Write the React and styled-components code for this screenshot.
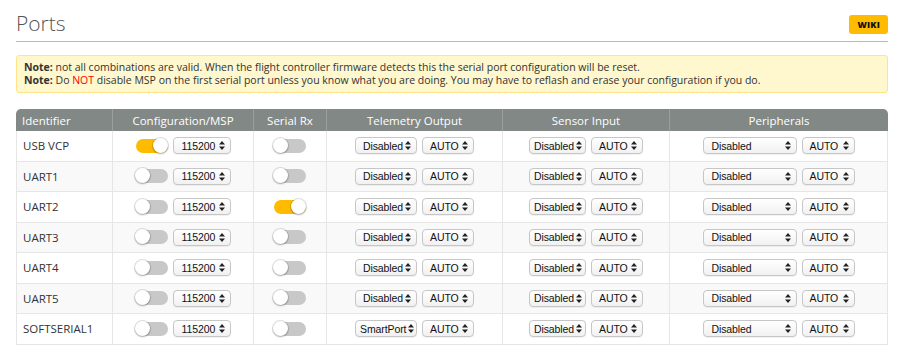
import styled, { createGlobalStyle } from "styled-components";

const Global = createGlobalStyle`
  body {
    margin: 0;
    background: #fff;
    font-family: "Open Sans", "Liberation Sans", sans-serif;
    color: #333;
  }
`;

const Page = styled.div`
  padding: 12px 12px 0 16px;
  width: 872px;
`;

const Header = styled.div`
  display: flex;
  justify-content: space-between;
  align-items: center;
  border-bottom: 1px solid #ffbb00;
  padding-bottom: 7px;
`;

const Title = styled.h1`
  margin: 0;
  font-size: 21px;
  font-weight: 300;
  color: #555;
  line-height: 22px;
`;

const Wiki = styled.span`
  background: #ffbb00;
  color: #111;
  font-size: 9px;
  font-weight: 800;
  padding: 3px 8px;
  border-radius: 3px;
  margin-top: 2px;
  letter-spacing: 0.2px;
`;

const Note = styled.div`
  margin-top: 13px;
  background: #fff7cd;
  border: 1px solid #ffe48b;
  border-radius: 3px;
  padding: 5px 7px;
  font-size: 10.5px;
  line-height: 13px;
  color: #333;
`;

const Red = styled.span`
  color: #ff0000;
`;

const Table = styled.table`
  margin-top: 16px;
  width: 872px;
  border-collapse: separate;
  border-spacing: 0;
  table-layout: fixed;
  font-size: 11.5px;
`;

const Th = styled.th`
  background: #828885;
  color: #fff;
  font-weight: 400;
  height: 22px;
  padding: 0;
  text-align: ${(p) => (p.left ? "left" : "center")};
  padding-left: ${(p) => (p.left ? "6px" : "0")};
  border-left: ${(p) => (p.first ? "none" : "1px solid #9a9f9c")};
  border-top-left-radius: ${(p) => (p.first ? "5px" : "0")};
  border-top-right-radius: ${(p) => (p.last ? "5px" : "0")};
`;

const Tr = styled.tr`
  background: ${(p) => (p.odd ? "#f9f9f9" : "#fff")};
`;

const Td = styled.td`
  height: 29.5px;
  padding: 0;
  border-bottom: 1px solid #e6e6e6;
  border-left: 1px solid #e6e6e6;
  &:last-child {
    border-right: 1px solid #e6e6e6;
  }
`;

const IdCell = styled(Td)`
  padding-left: 6px;
  color: #333;
`;

const Cell = styled.div`
  display: flex;
  justify-content: center;
  align-items: center;
  gap: 5px;
`;

const Toggle = styled.span`
  position: relative;
  display: inline-block;
  width: 32px;
  height: 14px;
  border-radius: 8px;
  background: ${(p) => (p.on ? "#ffbb00" : "#c8c8c8")};
  &::after {
    content: "";
    position: absolute;
    top: -1px;
    left: ${(p) => (p.on ? "17px" : "-1px")};
    width: 15px;
    height: 15px;
    border-radius: 50%;
    background: #fff;
    box-shadow: 0 0 0 1px rgba(0, 0, 0, 0.12), 0 1px 2px rgba(0, 0, 0, 0.25);
  }
`;

const SelectBox = styled.span`
  display: inline-flex;
  align-items: center;
  justify-content: space-between;
  box-sizing: border-box;
  width: ${(p) => p.w}px;
  height: 17px;
  padding: 0 5px 0 ${(p) => p.pad}px;
  border: 1px solid #c6c6c6;
  border-radius: 4px;
  background: linear-gradient(#ffffff, #f1f1f1);
  font-family: "Liberation Sans", Arial, sans-serif;
  font-size: 10.5px;
  letter-spacing: -0.1px;
  color: #111;
  white-space: nowrap;
  overflow: hidden;
  box-shadow: 0 1px 0 rgba(0, 0, 0, 0.05);
  svg {
    flex: none;
    margin-left: 2px;
  }
`;

const Arrows = () => (
  <svg width="6" height="9" viewBox="0 0 6 9">
    <path d="M3 0 L6 3.5 H0 Z M3 9 L6 5.5 H0 Z" fill="#222" />
  </svg>
);

function Select({ w, pad = 6, children }) {
  return (
    <SelectBox w={w} pad={pad}>
      <span>{children}</span>
      <Arrows />
    </SelectBox>
  );
}

const rows = [
  { id: "USB VCP", msp: true, rx: false, tel: "Disabled" },
  { id: "UART1", msp: false, rx: false, tel: "Disabled" },
  { id: "UART2", msp: false, rx: true, tel: "Disabled" },
  { id: "UART3", msp: false, rx: false, tel: "Disabled" },
  { id: "UART4", msp: false, rx: false, tel: "Disabled" },
  { id: "UART5", msp: false, rx: false, tel: "Disabled" },
  { id: "SOFTSERIAL1", msp: false, rx: false, tel: "SmartPort" },
];

export default function App() {
  return (
    <>
      <Global />
      <Page>
        <Header>
          <Title>Ports</Title>
          <Wiki>WIKI</Wiki>
        </Header>
        <Note>
          <b>Note:</b> not all combinations are valid. When the flight controller firmware detects this the serial port configuration will be reset.
          <br />
          <b>Note:</b> Do <Red>NOT</Red> disable MSP on the first serial port unless you know what you are doing. You may have to reflash and erase your configuration if you do.
        </Note>
        <Table>
          <colgroup>
            <col style={{ width: 96 }} />
            <col style={{ width: 141 }} />
            <col style={{ width: 73 }} />
            <col style={{ width: 176 }} />
            <col style={{ width: 167 }} />
            <col style={{ width: 219 }} />
          </colgroup>
          <thead>
            <tr>
              <Th first left>Identifier</Th>
              <Th>Configuration/MSP</Th>
              <Th>Serial Rx</Th>
              <Th>Telemetry Output</Th>
              <Th>Sensor Input</Th>
              <Th last>Peripherals</Th>
            </tr>
          </thead>
          <tbody>
            {rows.map((r, i) => (
              <Tr key={r.id} odd={i % 2 === 1}>
                <IdCell>{r.id}</IdCell>
                <Td>
                  <Cell>
                    <Toggle on={r.msp} />
                    <Select w={58} pad={8}>115200</Select>
                  </Cell>
                </Td>
                <Td>
                  <Cell>
                    <Toggle on={r.rx} />
                  </Cell>
                </Td>
                <Td>
                  <Cell>
                    <Select w={62} pad={r.tel === "SmartPort" ? 4 : 7}>{r.tel}</Select>
                    <Select w={52} pad={7}>AUTO</Select>
                  </Cell>
                </Td>
                <Td>
                  <Cell>
                    <Select w={57} pad={4}>Disabled</Select>
                    <Select w={52} pad={7}>AUTO</Select>
                  </Cell>
                </Td>
                <Td>
                  <Cell>
                    <Select w={94} pad={8}>Disabled</Select>
                    <Select w={53} pad={7}>AUTO</Select>
                  </Cell>
                </Td>
              </Tr>
            ))}
          </tbody>
        </Table>
      </Page>
    </>
  );
}
